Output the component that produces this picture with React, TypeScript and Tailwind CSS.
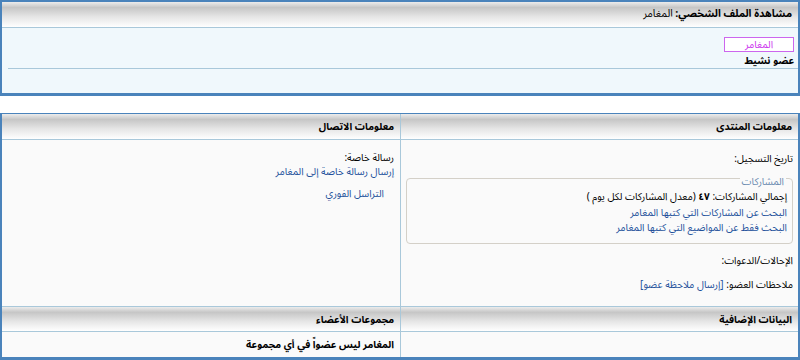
export default function App() {
  const head =
    'h-[26px] flex items-center px-[6px] font-bold text-black bg-[linear-gradient(to_bottom,#ececec_0%,#c6c6c6_22%,#e6e6e6_60%,#ffffff_100%)]';
  const link = 'text-[#22509a]';

  return (
    <div
      dir="rtl"
      className="w-[800px] h-[360px] bg-white text-[10px] leading-[15px] text-black font-['Noto_Sans_Arabic','DejaVu_Sans',sans-serif]"
    >
      {/* Profile header panel */}
      <div className="h-[96px] border-2 border-[#4a83bb] border-b-[3px] flex flex-col">
        <div className={head + ' border-b border-[#a9c8da] text-[10.5px]'}>
          <span>
            مشاهدة الملف الشخصي: <span className="font-normal">المغامر</span>
          </span>
        </div>
        <div className="flex-1 bg-[#f0f8fc] flex flex-col">
          <div className="px-[4px] pt-[9px]">
            <div className="w-[70px] h-[15px] border border-[#cc66ee] bg-white text-[#cc33ee] flex items-center justify-center">
              المغامر
            </div>
            <div className="font-bold mt-[2px] leading-[14px]">عضو نشيط</div>
          </div>
          <div className="ml-[6px] h-px bg-[#a9c8da]" />
        </div>
      </div>

      {/* Info panel */}
      <div className="mt-[17px] h-[247px] border-2 border-[#4a83bb] border-b-[3px] border-t border-t-[#4a83bb] grid grid-cols-2 grid-rows-[26px_166px_26px_1fr]">
        {/* Row 1: headers */}
        <div className={head + ' border-b border-l border-[#a9c8da]'}>معلومات المنتدى</div>
        <div className={head + ' border-b border-[#a9c8da]'}>معلومات الاتصال</div>

        {/* Row 2: bodies */}
        <div className="bg-[#fafafa] border-l border-[#a9c8da] px-[5px] pt-[11px]">
          <div>تاريخ التسجيل:</div>
          <fieldset className="mt-[5px] border border-[#d4d0c8] rounded-[4px] px-[5px] pb-[8px]">
            <legend className="px-[2px] mr-[1px] text-[#6a8bb0] translate-y-[3px]">المشاركات</legend>
            <div className="mt-[3px]">
              إجمالي المشاركات: <span className="font-bold">٤٧</span> (معدل المشاركات لكل يوم )
            </div>
            <div className={link + ' mt-[1px]'}>البحث عن المشاركات التي كتبها المغامر</div>
            <div className={link}>البحث فقط عن المواضيع التي كتبها المغامر</div>
          </fieldset>
          <div className="mt-[9px]">الإحالات/الدعوات:</div>
          <div className="mt-[9px]">
            ملاحظات العضو: <span className={link}>[إرسال ملاحظة عضو]</span>
          </div>
        </div>
        <div className="bg-[#fafafa] px-[6px] pt-[11px]">
          <div className="leading-[14px]">رسالة خاصة:</div>
          <div className={link + ' leading-[14px]'}>إرسال رسالة خاصة إلى المغامر</div>
          <div className={link + ' mt-[7px] mr-[10px]'}>التراسل الفوري</div>
        </div>

        {/* Row 3: headers */}
        <div className={head + ' border-y border-l border-[#a9c8da]'}>البيانات الإضافية</div>
        <div className={head + ' border-y border-[#a9c8da]'}>مجموعات الأعضاء</div>

        {/* Row 4 */}
        <div className="bg-[#fafafa] border-l border-[#a9c8da]" />
        <div className="bg-[#fafafa] px-[6px] flex items-center font-bold">
          المغامر ليس عضواً في أي مجموعة
        </div>
      </div>
    </div>
  );
}
